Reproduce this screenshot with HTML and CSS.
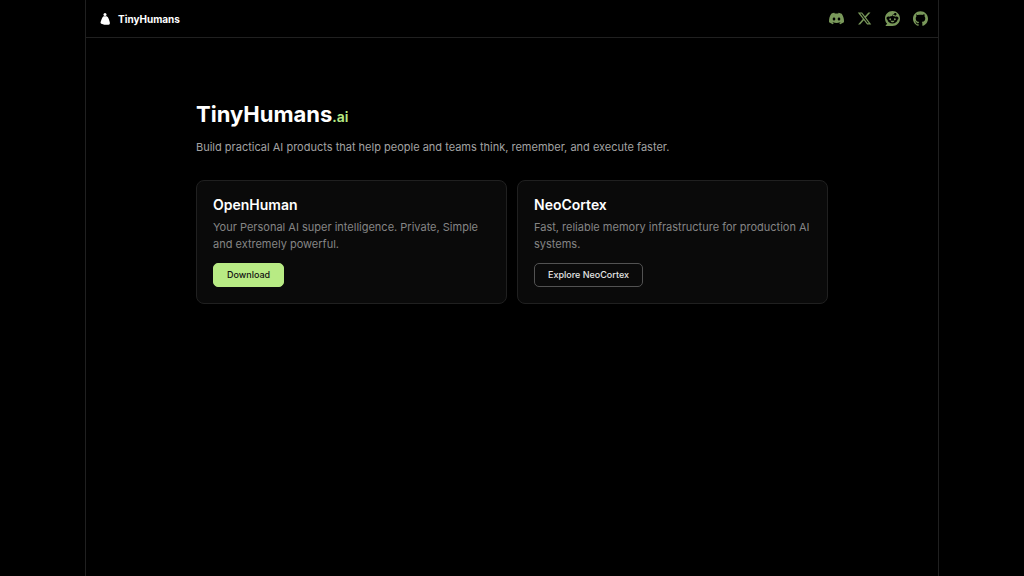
FILE: index.html
```
<!DOCTYPE html>
<html lang="en">
<head>
    <meta charset="UTF-8">
    <meta name="viewport" content="width=device-width, initial-scale=1.0">
    <title>TinyHumans</title>
    <link rel="stylesheet" href="styles.css">
</head>
<body>
    <div class="page">
        <header class="navbar">
            <a href="#" class="brand">
                <svg class="brand-logo" viewBox="0 0 16 16" aria-hidden="true">
                    <circle cx="8" cy="3.4" r="1.5"/>
                    <path d="M6.6 5.2C4.9 6.3 4.5 8.8 3.700 10.800c-.5 1.500.2 2.100 1.400 2.100 1.100 0 1.800.8 3.200.8s2-.2 2.900.1c1.500.3 2-1.300 1.500-2.800-.7-2.300-1-4.700-3-5.800z"/>
                </svg>
                <span>TinyHumans</span>
            </a>
            <nav class="social">
                <a href="#" aria-label="Discord">
                    <svg viewBox="0 0 24 24"><path d="M20.317 4.37a19.791 19.791 0 0 0-4.885-1.515.074.074 0 0 0-.079.037c-.21.375-.444.864-.608 1.25a18.270 18.270 0 0 0-5.487 0 12.640 12.640 0 0 0-.617-1.250.077.077 0 0 0-.079-.037A19.736 19.736 0 0 0 3.677 4.370a.070.070 0 0 0-.032.027C.533 9.046-.320 13.580.099 18.058a.082.082 0 0 0 .031.056 19.900 19.900 0 0 0 5.993 3.030.078.078 0 0 0 .084-.028c.462-.630.874-1.295 1.226-1.994a.076.076 0 0 0-.041-.106 13.107 13.107 0 0 1-1.872-.892.077.077 0 0 1-.008-.128c.126-.094.252-.192.372-.292a.074.074 0 0 1 .078-.010c3.928 1.793 8.180 1.793 12.061 0a.074.074 0 0 1 .079.009c.120.099.246.198.373.293a.077.077 0 0 1-.007.128 12.299 12.299 0 0 1-1.873.891.077.077 0 0 0-.041.107c.360.698.772 1.363 1.225 1.993a.076.076 0 0 0 .084.029 19.839 19.839 0 0 0 6.002-3.030.077.077 0 0 0 .031-.055c.500-5.177-.838-9.674-3.548-13.660a.061.061 0 0 0-.031-.029zM8.020 15.331c-1.183 0-2.157-1.086-2.157-2.419s.955-2.419 2.157-2.419c1.211 0 2.176 1.095 2.157 2.419 0 1.333-.956 2.419-2.157 2.419zm7.975 0c-1.183 0-2.157-1.086-2.157-2.419s.955-2.419 2.157-2.419c1.211 0 2.176 1.095 2.157 2.419 0 1.333-.946 2.419-2.157 2.419z"/></svg>
                </a>
                <a href="#" aria-label="X">
                    <svg viewBox="0 0 24 24"><path d="M18.244 2.25h3.308l-7.227 8.260 8.502 11.240H16.170l-5.214-6.817L4.990 21.750H1.680l7.730-8.835L1.254 2.250H8.080l4.713 6.231zm-1.161 17.520h1.833L7.084 4.126H5.117z"/></svg>
                </a>
                <a href="#" aria-label="Reddit">
                    <svg viewBox="0 0 24 24"><path d="M12 0C5.373 0 0 5.373 0 12c0 3.314 1.343 6.314 3.515 8.485l-2.286 2.286C.775 23.225 1.097 24 1.738 24H12c6.627 0 12-5.373 12-12S18.627 0 12 0Zm4.388 3.199c1.104 0 1.999.895 1.999 1.999 0 1.105-.895 2-1.999 2-.946 0-1.739-.657-1.947-1.539v.002c-1.147.162-2.032 1.150-2.032 2.341v.007c1.776.067 3.400.567 4.686 1.363.473-.363 1.064-.580 1.707-.580 1.547 0 2.802 1.254 2.802 2.802 0 1.117-.655 2.081-1.601 2.531-.088 3.256-3.637 5.876-7.997 5.876-4.361 0-7.905-2.617-7.998-5.870-.954-.447-1.614-1.415-1.614-2.538 0-1.548 1.255-2.802 2.803-2.802.645 0 1.239.218 1.712.585 1.275-.790 2.881-1.291 4.640-1.365v-.010c0-1.663 1.263-3.034 2.880-3.207.188-.911.993-1.595 1.959-1.595Zm-8.085 8.376c-.784 0-1.459.780-1.506 1.797-.047 1.016.640 1.429 1.426 1.429.786 0 1.371-.369 1.418-1.385.047-1.017-.553-1.841-1.338-1.841Zm7.406 0c-.786 0-1.385.824-1.338 1.841.047 1.017.634 1.385 1.418 1.385.785 0 1.473-.413 1.426-1.429-.046-1.017-.721-1.797-1.506-1.797Zm-3.703 4.013c-.974 0-1.907.048-2.770.135-.147.015-.241.168-.183.305.483 1.154 1.622 1.964 2.953 1.964 1.330 0 2.470-.810 2.953-1.964.057-.137-.037-.290-.184-.305-.863-.087-1.795-.135-2.769-.135Z"/></svg>
                </a>
                <a href="#" aria-label="GitHub">
                    <svg viewBox="0 0 24 24"><path d="M12 .297c-6.630 0-12 5.373-12 12 0 5.303 3.438 9.800 8.205 11.385.600.113.820-.258.820-.577 0-.285-.010-1.040-.015-2.040-3.338.724-4.042-1.610-4.042-1.610C4.422 18.070 3.633 17.700 3.633 17.700c-1.087-.744.084-.729.084-.729 1.205.084 1.838 1.236 1.838 1.236 1.070 1.835 2.809 1.305 3.495.998.108-.776.417-1.305.760-1.605-2.665-.300-5.466-1.332-5.466-5.930 0-1.310.465-2.380 1.235-3.220-.135-.303-.540-1.523.105-3.176 0 0 1.005-.322 3.300 1.230.960-.267 1.980-.399 3-.405 1.020.006 2.040.138 3 .405 2.280-1.552 3.285-1.230 3.285-1.230.645 1.653.240 2.873.120 3.176.765.840 1.230 1.910 1.230 3.220 0 4.610-2.805 5.625-5.475 5.920.420.360.810 1.096.810 2.220 0 1.606-.015 2.896-.015 3.286 0 .315.210.690.825.570C20.565 22.092 24 17.592 24 12.297c0-6.627-5.373-12-12-12"/></svg>
                </a>
            </nav>
        </header>
        <main>
            <h1>TinyHumans<span>.ai</span></h1>
            <p class="tagline">Build practical AI products that help people and teams think, remember, and execute faster.</p>
            <div class="cards">
                <section class="card">
                    <h2>OpenHuman</h2>
                    <p>Your Personal AI super intelligence. Private, Simple and extremely powerful.</p>
                    <a href="#" class="btn btn-primary">Download</a>
                </section>
                <section class="card">
                    <h2>NeoCortex</h2>
                    <p>Fast, reliable memory infrastructure for production AI systems.</p>
                    <a href="#" class="btn">Explore NeoCortex</a>
                </section>
            </div>
        </main>
    </div>
</body>
</html>
```
FILE: styles.css
```
* {
    box-sizing: border-box;
}
body {
    margin: 0;
    background-color: #000;
    color: #fff;
    font-family: Inter, "Liberation Sans", sans-serif;
}
a {
    color: inherit;
    text-decoration: none;
}
h1, h2, p {
    margin: 0;
}
.page {
    max-width: 854px;
    min-height: 100vh;
    margin: 0 auto;
    border-left: 1px solid #202020;
    border-right: 1px solid #202020;
}
.navbar {
    display: flex;
    align-items: center;
    justify-content: space-between;
    height: 38px;
    padding: 0 10px 0 11px;
    border-bottom: 1px solid #202020;
}
.brand {
    display: flex;
    align-items: center;
    gap: 5px;
    font-size: 10px;
    font-weight: 700;
}
.brand-logo {
    width: 16px;
    height: 16px;
    fill: #fff;
}
.social {
    display: flex;
    gap: 13px;
    color: #79985a;
}
.social svg {
    display: block;
    width: 15px;
    height: 15px;
    fill: currentColor;
}
main {
    max-width: 664px;
    margin: 0 auto;
    padding: 60px 16px;
}
h1 {
    font-size: 22px;
    line-height: 32px;
    font-weight: 700;
}
h1 span {
    color: #b8eb84;
    font-size: 14px;
    font-weight: 600;
}
.tagline {
    margin-top: 5px;
    color: #a3a3a3;
    font-size: 11px;
    line-height: 18px;
}
.cards {
    display: grid;
    grid-template-columns: 1fr 1fr;
    gap: 10px;
    margin-top: 24px;
}
.card {
    padding: 16px;
    background-color: #0a0a0a;
    border: 1px solid #202020;
    border-radius: 8px;
}
.card h2 {
    font-size: 14px;
    line-height: 16px;
    font-weight: 600;
}
.card p {
    margin: 6px 0 10px;
    color: #858585;
    font-size: 11px;
    line-height: 17px;
}
.btn {
    display: inline-block;
    padding: 0 13px;
    border: 1px solid #525252;
    border-radius: 5px;
    color: #e5e5e5;
    font-size: 9px;
    line-height: 22px;
    font-weight: 500;
    vertical-align: top;
}
.btn-primary {
    background-color: #b8eb84;
    border-color: #b8eb84;
    color: #111;
}
@media (max-width: 600px) {
    .cards {
        grid-template-columns: 1fr;
    }
}
```
